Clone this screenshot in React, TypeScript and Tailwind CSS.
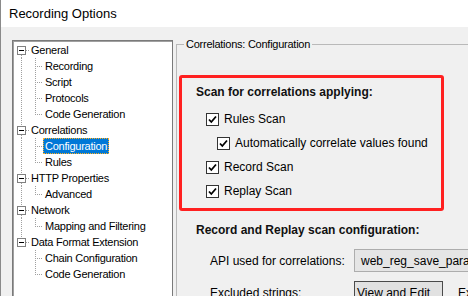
import React from "react";

type Node = { label: string; children?: string[] };

const tree: Node[] = [
  { label: "General", children: ["Recording", "Script", "Protocols", "Code Generation"] },
  { label: "Correlations", children: ["Configuration", "Rules"] },
  { label: "HTTP Properties", children: ["Advanced"] },
  { label: "Network", children: ["Mapping and Filtering"] },
  { label: "Data Format Extension", children: ["Chain Configuration", "Code Generation"] },
];

const dots = { stroke: "#a0a0a0", strokeWidth: 1, strokeDasharray: "1 1" };

function RootLines({ first, last }: { first: boolean; last: boolean }) {
  return (
    <svg width="17" height="16" className="shrink-0">
      {!first && <line x1="8.5" y1="0" x2="8.5" y2="4" {...dots} />}
      {!last && <line x1="8.5" y1="13" x2="8.5" y2="16" {...dots} />}
      <line x1="13" y1="8.5" x2="17" y2="8.5" {...dots} />
      <rect x="4.5" y="4.5" width="8" height="8" fill="#fff" stroke="#808080" />
      <line x1="6" y1="8.5" x2="11" y2="8.5" stroke="#000" />
    </svg>
  );
}

function ChildLines({ rootLast, childLast }: { rootLast: boolean; childLast: boolean }) {
  return (
    <svg width="30" height="16" className="shrink-0">
      {!rootLast && <line x1="8.5" y1="0" x2="8.5" y2="16" {...dots} />}
      <line x1="22.5" y1="0" x2="22.5" y2={childLast ? 9 : 16} {...dots} />
      <line x1="24" y1="8.5" x2="30" y2="8.5" {...dots} />
    </svg>
  );
}

function Check({ label }: { label: string }) {
  return (
    <div className="flex h-[24px] items-center gap-[5px]">
      <svg width="13" height="13" className="shrink-0">
        <rect x="0.5" y="0.5" width="12" height="12" fill="#fff" stroke="#333" />
        <polyline points="3,6.5 5.3,9 10,3.5" fill="none" stroke="#000" strokeWidth="1.8" />
      </svg>
      <span>{label}</span>
    </div>
  );
}

export default function App() {
  return (
    <div className="w-[468px] h-[296px] overflow-hidden bg-[#f0f0f0] border-l border-[#8a8a8a] text-black" style={{ fontFamily: "'Liberation Sans', Arial, sans-serif" }}>
      {/* title bar */}
      <div className="h-[27px] bg-white flex items-center pl-[8px] text-[13px]">Recording Options</div>

      <div className="flex items-start pl-[11px]">
        {/* tree */}
        <div className="mt-[13px] w-[161px] h-[280px] shrink-0 bg-white border border-[#7a7a7a] shadow-[inset_1px_1px_0_#a0a0a0] pt-[1px] text-[11px] tracking-[-0.25px]">
          {tree.map((node, i) => {
            const rootLast = i === tree.length - 1;
            return (
              <div key={node.label}>
                <div className="flex h-[16px] items-center">
                  <RootLines first={i === 0} last={rootLast} />
                  <span className="pl-[1px] leading-[16px]">{node.label}</span>
                </div>
                {node.children?.map((c, j) => {
                  const selected = c === "Configuration";
                  return (
                    <div key={c} className="flex h-[16px] items-center">
                      <ChildLines rootLast={rootLast} childLast={j === node.children!.length - 1} />
                      <span
                        className={
                          selected
                            ? "px-[2px] leading-[14px] bg-[#0078d7] text-white outline outline-1 outline-dotted outline-[#ffb020] -outline-offset-1 h-[16px] flex items-center"
                            : "px-[2px] leading-[16px]"
                        }
                      >
                        {c}
                      </span>
                    </div>
                  );
                })}
              </div>
            );
          })}
        </div>

        {/* group box */}
        <fieldset className="mt-[11px] ml-[3px] w-[320px] shrink-0 h-[290px] border border-[#b9b9b9] text-[12px]">
          <legend className="ml-[7px] px-[2px] text-[11px] tracking-[-0.25px] leading-[13px]">Correlations: Configuration</legend>

          <div className="mt-[24px] ml-[2px] w-[265px] border-[3px] border-[#ff2020] rounded-[3px] pt-[7px] pl-[14px] pb-[5px]">
            <div className="font-bold leading-[14px] text-[#111]">Scan for correlations applying:</div>
            <div className="mt-[8px] pl-[10px] flex flex-col">
              <Check label="Rules Scan" />
              <div className="pl-[11px]">
                <Check label="Automatically correlate values found" />
              </div>
              <Check label="Record Scan" />
              <Check label="Replay Scan" />
            </div>
          </div>

          <div className="mt-[12px] ml-[19px] font-bold leading-[14px] text-[#111]">Record and Replay scan configuration:</div>

          <div className="mt-[12px] ml-[33px] flex h-[23px] items-center">
            <span className="w-[144px] shrink-0">API used for correlations:</span>
            <div className="w-[130px] h-[23px] shrink-0 border border-[#adadad] bg-[#e5e5e5] pl-[6px] flex items-center whitespace-nowrap overflow-hidden">
              web_reg_save_param_ex
            </div>
          </div>

          <div className="mt-[9px] ml-[33px] flex h-[23px] items-center">
            <span className="w-[144px] shrink-0">Excluded strings:</span>
            <div className="w-[89px] h-[23px] shrink-0 border border-[#4a4a4a] bg-[#e1e1e1] pl-[2px] flex items-center whitespace-nowrap">
              View and Edit
            </div>
            <span className="ml-[15px] whitespace-nowrap">Excluded Headers:</span>
          </div>
        </fieldset>
      </div>
    </div>
  );
}
